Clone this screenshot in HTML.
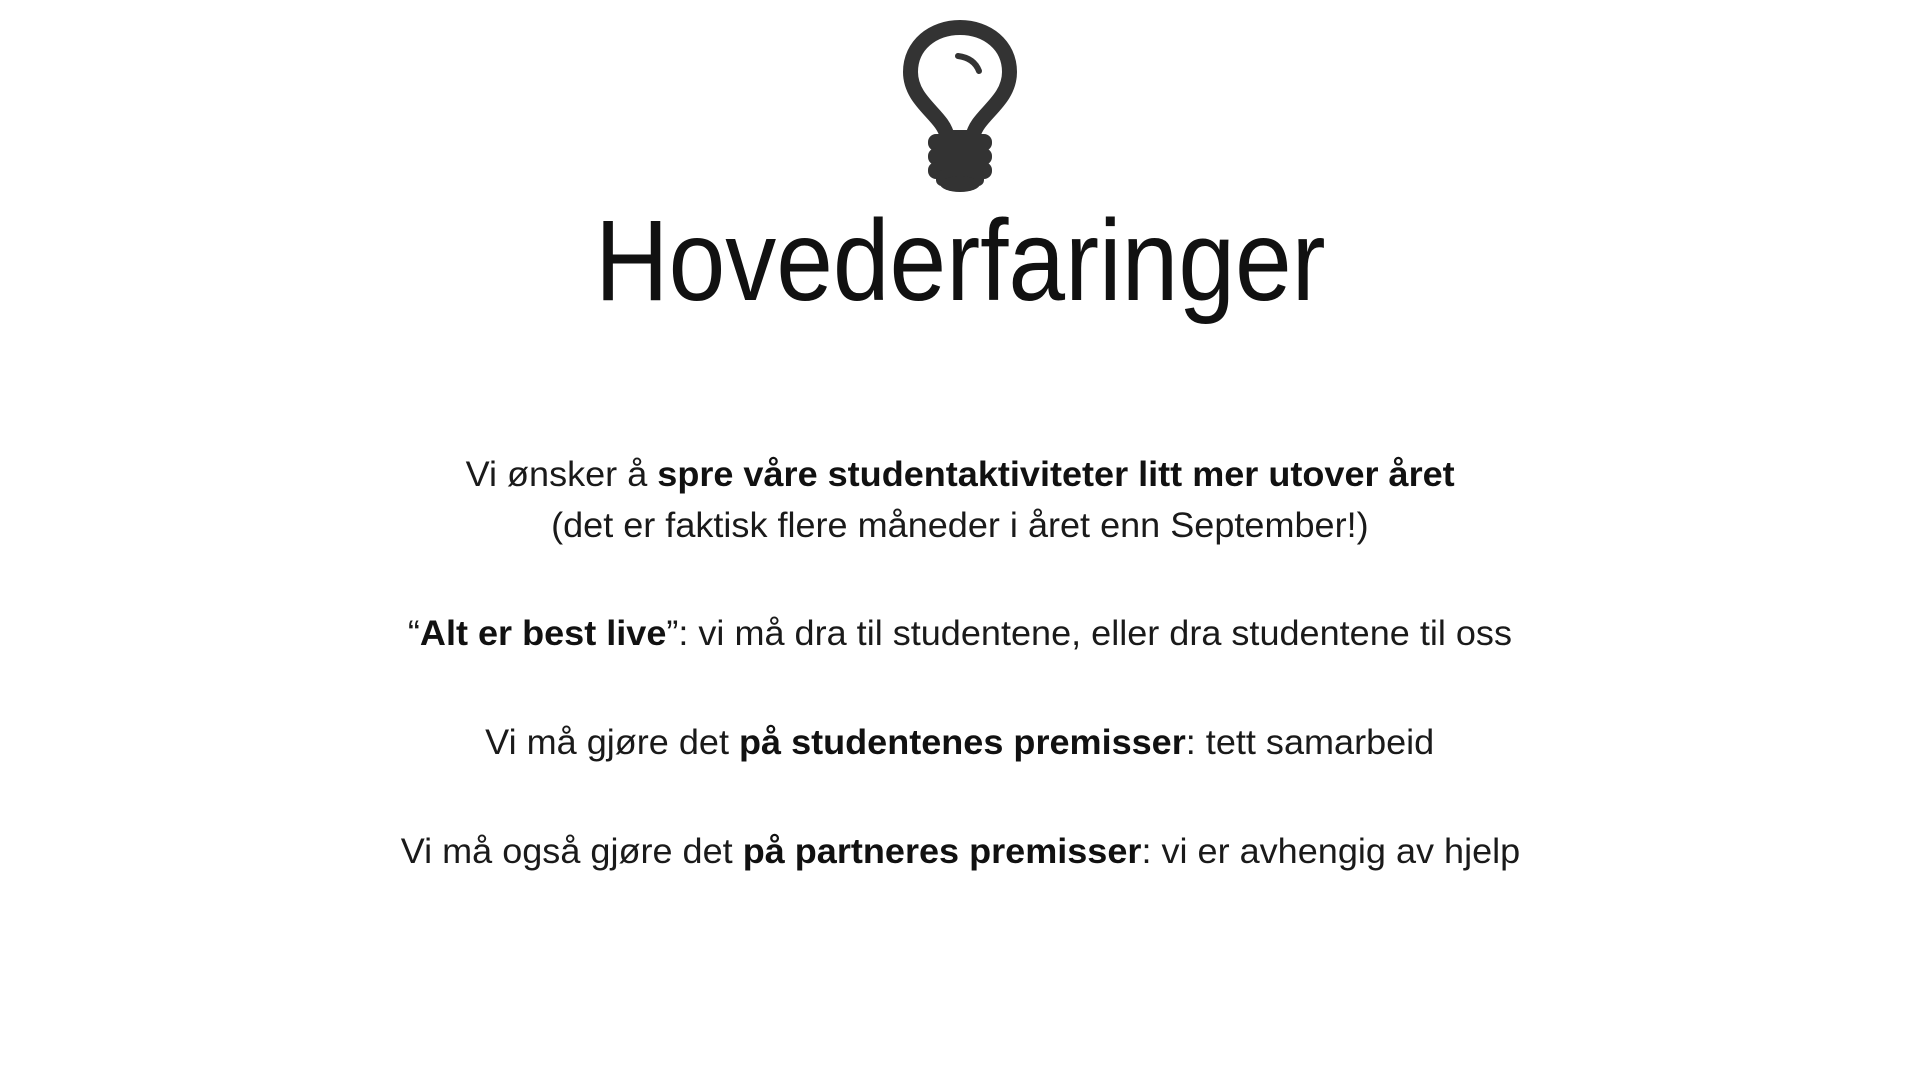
<!DOCTYPE html>
<html><head><meta charset="utf-8"><style>
html,body{margin:0;padding:0;background:#fff;}
body{width:1920px;height:1080px;position:relative;overflow:hidden;font-family:"Liberation Sans",sans-serif;color:#141414;}
.t{position:absolute;left:0;width:1920px;text-align:center;white-space:nowrap;}
.t span.in{display:inline-block;transform-origin:center;}
.title{top:196px;font-size:115px;line-height:130px;font-weight:normal;color:#111;}
.title span.in{transform:scaleX(0.886);}
.b{font-size:35px;line-height:40px;font-weight:normal;color:#1a1a1a;}
.b span.in{transform:scaleX(1.03);}
b{font-weight:bold;color:#111;}
</style></head><body>
<svg style="position:absolute;left:903px;top:20px" width="114" height="172" viewBox="0 0 114 172">
<path d="M44,116 C40,95 7.5,82 7.5,52 C7.5,25 30,7.5 57,7.5 C84,7.5 106.5,25 106.5,52 C106.5,82 74,95 70,116" fill="none" stroke="#333" stroke-width="15"/>
<path d="M55,36 Q71,38 76,51" fill="none" stroke="#333" stroke-width="6" stroke-linecap="round"/>
<rect x="37" y="110" width="40" height="10" fill="#333"/>
<rect x="25" y="114" width="64" height="17" rx="8" fill="#333"/>
<rect x="25" y="128" width="64" height="17" rx="8" fill="#333"/>
<rect x="25" y="142" width="64" height="17" rx="8" fill="#333"/>
<rect x="33" y="150" width="48" height="16" rx="6" fill="#333"/>
<ellipse cx="57" cy="164" rx="20" ry="8" fill="#333"/>
</svg>
<div class="t title"><span class="in">Hovederfaringer</span></div>
<div class="t b" style="top:455px"><span class="in">Vi ønsker å <b>spre våre studentaktiviteter litt mer utover året</b></span></div>
<div class="t b" style="top:506px"><span class="in">(det er faktisk flere måneder i året enn September!)</span></div>
<div class="t b" style="top:614px"><span class="in">“<b>Alt er best live</b>”: vi må dra til studentene, eller dra studentene til oss</span></div>
<div class="t b" style="top:723px"><span class="in">Vi må gjøre det <b>på studentenes premisser</b>: tett samarbeid</span></div>
<div class="t b" style="top:832px"><span class="in">Vi må også gjøre det <b>på partneres premisser</b>: vi er avhengig av hjelp</span></div>
</body></html>
